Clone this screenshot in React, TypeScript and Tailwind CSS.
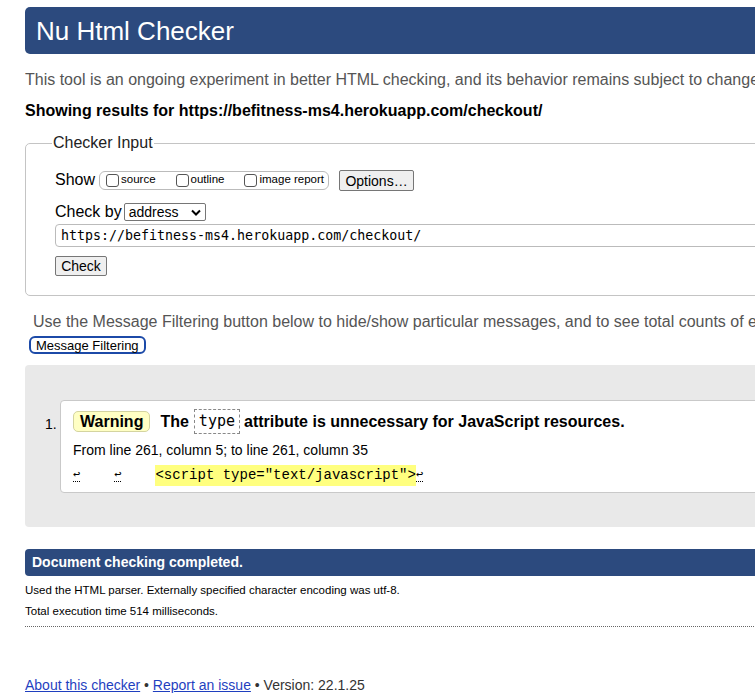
import React from 'react';

const Ret = () => (
  <span className="border-b border-dotted border-black text-[12px] leading-none">↩</span>
);

const App = () => {
  return (
    <div className="w-[755px] h-[697px] overflow-hidden bg-white font-['Liberation_Sans',Arial,sans-serif] text-black">
      <div className="w-[1000px] pl-[25px] pt-[7px]">
        {/* Header */}
        <div className="h-[47px] bg-[#2c4a7e] rounded-l-[5px] flex items-center pl-[11px]">
          <h1 className="text-[26px] text-white leading-none">Nu Html Checker</h1>
        </div>

        <p className="mt-[16px] text-[16px] leading-[20px] text-[#555]">
          This tool is an ongoing experiment in better HTML checking, and its behavior remains subject to change
        </p>
        <p className="mt-[11px] text-[16px] leading-[20px] font-bold">
          Showing results for https://befitness-ms4.herokuapp.com/checkout/
        </p>

        {/* Checker input */}
        <fieldset className="mt-[12px] border border-[#c4c4c4] rounded-[5px] pl-[29px] pb-[17px] pt-[16px]">
          <legend className="ml-[-3px] px-[1px] text-[16px] leading-[20px] text-[#222]">Checker Input</legend>
          <div className="flex items-center h-[22px]">
            <span className="text-[16px] mr-[4px]">Show</span>
            <div className="flex items-center h-[19px] border border-[#bbb] rounded-[6px] pl-[6px] pr-[4px] text-[11.5px]">
              <span className="w-[13px] h-[13px] border border-[#555] rounded-[3px] mr-[2px]" />
              <span>source</span>
              <span className="w-[13px] h-[13px] border border-[#555] rounded-[3px] ml-[20px] mr-[2px]" />
              <span>outline</span>
              <span className="w-[13px] h-[13px] border border-[#555] rounded-[3px] ml-[20px] mr-[2px]" />
              <span>image report</span>
            </div>
            <button className="ml-[10px] h-[21px] w-[75px] bg-[#efefef] border border-[#767676] rounded-[2px] text-[14px]">
              Options…
            </button>
          </div>
          <div className="flex items-center mt-[11px] h-[20px]">
            <span className="text-[16px] mr-[2px]">Check by</span>
            <div className="w-[82px] h-[18px] border border-[#767676] rounded-[2px] flex items-center justify-between pl-[4px] pr-[4px] text-[14px]">
              <span>address</span>
              <svg width="10" height="7" viewBox="0 0 10 7">
                <path d="M1 1.5l4 4 4-4" stroke="black" strokeWidth="2" fill="none" />
              </svg>
            </div>
          </div>
          <div className="mt-[2px] h-[23px] border border-[#bbb] rounded-l-[4px] flex items-center pl-[5px] font-['DejaVu_Sans_Mono',monospace] text-[13.3px]">
            https://befitness-ms4.herokuapp.com/checkout/
          </div>
          <button className="mt-[9px] h-[20px] w-[52px] bg-[#efefef] border border-[#767676] rounded-[2px] text-[14px] leading-none">
            Check
          </button>
        </fieldset>

        <p className="mt-[16px] pl-[8px] text-[16px] leading-[20px] text-[#555]">
          Use the Message Filtering button below to hide/show particular messages, and to see total counts of errors and warnings.
        </p>
        <button className="mt-[4px] ml-[4px] h-[18px] px-[5px] border-2 border-[#1c4aa8] rounded-[6px] text-[13px] leading-none bg-white">
          Message Filtering
        </button>

        {/* Results */}
        <div className="mt-[8px] h-[162px] bg-[#e9e9e9] rounded-l-[4px] pt-[35px] pl-[35px]">
          <div className="relative h-[93px] bg-white border border-[#c9c9c9] rounded-l-[4px] pl-[12px] pt-[8px]">
            <span className="absolute -left-[16px] top-[13px] text-[14px]">1.</span>
            <div className="flex items-center h-[26px] font-bold text-[16px]">
              <span className="bg-[#ffffc4] border border-[#d4d4a0] rounded-[5px] px-[6px] h-[21px] flex items-center">Warning</span>
              <span className="ml-[10px]">The</span>
              <code className="ml-[5px] border border-dashed border-[#888] px-[4px] h-[25px] flex items-center font-['DejaVu_Sans_Mono',monospace] font-normal text-[15px]">
                type
              </code>
              <span className="ml-[4px]">attribute is unnecessary for JavaScript resources.</span>
            </div>
            <p className="mt-[6px] text-[14px] leading-[18px]">From line 261, column 5; to line 261, column 35</p>
            <div className="mt-[8px] flex items-center h-[17px] font-['Liberation_Mono','Courier_New',monospace] text-[14px]">
              <Ret />
              <span className="w-[34px]" />
              <Ret />
              <span className="w-[34px]" />
              <span className="bg-[#ffff7f]">&lt;script type="text/javascript"&gt;</span>
              <Ret />
            </div>
          </div>
        </div>

        {/* Summary */}
        <div className="mt-[22px] h-[27px] bg-[#2c4a7e] rounded-l-[4px] flex items-center pl-[7px]">
          <span className="text-white font-bold text-[14px]">Document checking completed.</span>
        </div>
        <p className="mt-[7px] text-[11.5px] leading-[14px]">
          Used the HTML parser. Externally specified character encoding was utf-8.
        </p>
        <p className="mt-[7px] text-[11.5px] leading-[14px]">Total execution time 514 milliseconds.</p>
        <div className="mt-[8px] border-t border-dotted border-[#666]" />

        <p className="mt-[49px] text-[14px] leading-[18px] text-[#333]">
          <a href="#" className="text-[#1f3fbf] underline">About this checker</a>
          {' • '}
          <a href="#" className="text-[#1f3fbf] underline">Report an issue</a>
          {' • Version: 22.1.25'}
        </p>
      </div>
    </div>
  );
};

export default App;
